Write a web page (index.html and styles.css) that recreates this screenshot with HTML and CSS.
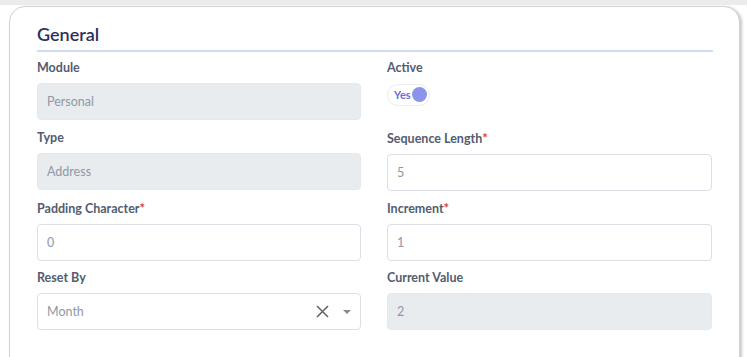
FILE: index.html
```html
<!DOCTYPE html>
<html lang="en">
<head>
    <meta charset="UTF-8">
    <title>Sequence - General</title>
    <link rel="stylesheet" href="styles.css">
</head>
<body>
    <div class="page-top"></div>
    <div class="card">
        <!-- Section title -->
        <div class="section-title">General</div>

        <div class="form-grid">
            <div class="field">
                <label class="field-label">Module</label>
                <div class="input disabled">Personal</div>
            </div>
            <div class="field">
                <label class="field-label">Active</label>
                <div class="toggle">
                    <span class="toggle-text">Yes</span>
                    <span class="toggle-knob"></span>
                </div>
            </div>

            <div class="field">
                <label class="field-label">Type</label>
                <div class="input disabled">Address</div>
            </div>
            <div class="field">
                <label class="field-label">Sequence Length<span class="req">*</span></label>
                <div class="input">5</div>
            </div>

            <div class="field">
                <label class="field-label">Padding Character<span class="req">*</span></label>
                <div class="input">0</div>
            </div>
            <div class="field">
                <label class="field-label">Increment<span class="req">*</span></label>
                <div class="input">1</div>
            </div>

            <div class="field">
                <label class="field-label">Reset By</label>
                <div class="input select">
                    <span class="select-value">Month</span>
                    <svg class="clear-icon" width="13" height="13" viewBox="0 0 13 13">
                        <path d="M1 1 L12 12 M12 1 L1 12" stroke="#666" stroke-width="1.6" fill="none"/>
                    </svg>
                    <span class="caret"></span>
                </div>
            </div>
            <div class="field">
                <label class="field-label">Current Value</label>
                <div class="input disabled">2</div>
            </div>
        </div>
    </div>
</body>
</html>
```

FILE: styles.css
```css
body {
    margin: 0;
    font-family: Lato, "Open Sans", Arial, sans-serif;
    background: #fff;
    overflow: hidden;
}

.page-top {
    height: 5px;
    background: #ececee;
}

.card {
    margin: 1px 7px 0 9px;
    height: 400px;
    background: white;
    border: 1px solid #d2d2d4;
    border-radius: 16px;
    box-shadow: 2px 1px 3px rgba(0, 0, 0, 0.22);
    padding: 15px 26px 0 27px;
}

/* Title */
.section-title {
    font-size: 18px;
    line-height: 24px;
    font-weight: 600;
    color: #2b2f5b;
    padding-bottom: 4px;
    border-bottom: 2px solid #cddcf0;
}

/* Form */
.form-grid {
    display: grid;
    grid-template-columns: 324px 325px;
    column-gap: 26px;
    padding-top: 8px;
}

.field {
    height: 70px;
}

.field-label {
    display: block;
    font-size: 12.5px;
    line-height: 16px;
    font-weight: 700;
    color: #535c70;
    margin-bottom: 7px;
}

.req {
    color: #e53935;
    font-size: 13px;
}

.input {
    box-sizing: border-box;
    height: 37px;
    border: 1px solid #dcdfe5;
    border-radius: 4px;
    padding: 0 9px;
    font-size: 12.5px;
    line-height: 35px;
    color: #8f98a4;
    background: white;
}

.input.disabled {
    background: #e9ecef;
    border-color: #e6e9ec;
}

/* Select */
.select {
    display: flex;
    align-items: center;
}

.select-value {
    flex: 1;
}

.clear-icon {
    margin-right: 14px;
}

.caret {
    width: 0;
    height: 0;
    border-left: 4px solid transparent;
    border-right: 4px solid transparent;
    border-top: 4px solid #8a8a8a;
}

/* Toggle */
.toggle {
    display: inline-flex;
    align-items: center;
    box-sizing: border-box;
    height: 22px;
    width: 43px;
    margin-top: -1px;
    padding: 0 2px 0 6px;
    border: 1px solid #ececf0;
    border-radius: 11px;
    background: white;
}

.toggle-text {
    font-size: 11px;
    font-weight: 700;
    color: #6571d4;
    flex: 1;
}

.toggle-knob {
    width: 15px;
    height: 15px;
    border-radius: 50%;
    background: #8a94ea;
}
```
